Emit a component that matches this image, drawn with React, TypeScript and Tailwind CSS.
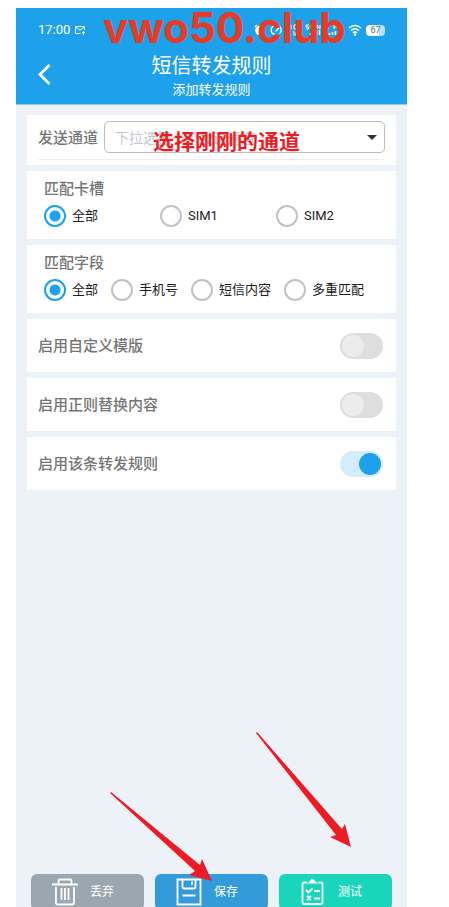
import { useState } from "react";
import type { ReactNode } from "react";

interface RadioGroupProps {
  title: string;
  name: string;
  options: string[];
  className: string;
}

const simOptions = ["全部", "SIM1", "SIM2"];
const fieldOptions = ["全部", "手机号", "短信内容", "多重匹配"];

const switches = [
  { label: "启用自定义模版", on: false },
  { label: "启用正则替换内容", on: false },
  { label: "启用该条转发规则", on: true },
];

function StatusBar() {
  return (
    <div className="flex h-11 items-center justify-between pl-[22px] pr-[22px] text-white">
      <div className="flex items-center gap-1">
        <span className="text-[13px] leading-4">17:00</span>
        <svg className="h-3 w-3" viewBox="0 0 12 12" fill="none" stroke="currentColor">
          <path d="M6.500 9.500H1.500V2.500H10.500V6M1.500 3L6 6L10.500 3M8 8.500H11M9.500 7V11" />
        </svg>
      </div>
      <div className="flex items-center gap-1">
        <svg className="h-3 w-3" viewBox="0 0 12 12">
          <circle cx="6" cy="6.500" r="4.800" fill="currentColor" />
          <path d="M.8 3L3 1M11.200 3L9 1" stroke="currentColor" strokeWidth="1.300" />
          <path d="M6 4V7L8 8" fill="none" stroke="#1da1ea" />
        </svg>
        <svg className="h-3 w-3" viewBox="0 0 12 12" fill="none" stroke="currentColor" strokeWidth="1.300">
          <path d="M3 10A5 5 0 1 1 9.500 9.800M5.500 7.500L9 4M3 10H5" />
        </svg>
        <svg className="h-3 w-[58px]" viewBox="0 0 58 12" fill="none" stroke="currentColor">
          <path d="M2.500 1V5H5V1H2.500M8 1H12V5H8V1M2 7V11M5 7L3 9L5 11M8 7V11H10V8M13 7L11 11" />
          <path d="M23 1H20V3H22.500V5H20M28 1H25V5H28V3M31 5V1L34 5V1" />
          <path d="M24.500 11V9M27.500 11V8M30.500 11V7M33.500 11V6" strokeWidth="1.500" />
          <path d="M42 1H39V5H42V3M48 5V1M48 3H52M52 5V1" />
          <path d="M43.500 11V9M46.500 11V8M49.500 11V7M52.500 11V6" strokeWidth="1.500" />
        </svg>
        <svg className="h-3 w-[14px]" viewBox="0 0 14 12" fill="none" stroke="currentColor" strokeWidth="1.500">
          <path d="M1 4Q7 -1 13 4M3 6.500Q7 3 11 6.500M5 8.800Q7 7 9 8.800" />
          <circle cx="7" cy="10.500" r=".6" fill="currentColor" />
        </svg>
        <span className="flex h-[11px] w-[19px] items-center justify-center rounded-[4px] bg-linear-to-r from-white from-70% to-[#b9e2f8] to-70% text-[9px] leading-none text-[#4a7088]">
          67
        </span>
      </div>
    </div>
  );
}

function Header() {
  return (
    <header className="h-[97px] border-b border-[#8fcdf1] bg-[#1da1ea] text-white">
      <StatusBar />
      <div className="grid grid-cols-[56px_1fr_56px]">
        <button type="button" aria-label="返回" className="flex items-center pl-[21px]">
          <svg className="h-6 w-3.5" viewBox="0 0 14 24" fill="none" stroke="currentColor" strokeWidth="2.800">
            <path d="M12.500 1L3 10.500L12.500 20" />
          </svg>
        </button>
        <div className="text-center">
          <h1 className="pt-0.5 text-[20px] leading-6">短信转发规则</h1>
          <p className="mt-0.5 text-[13px] leading-5">添加转发规则</p>
        </div>
      </div>
    </header>
  );
}

function Card({ children }: { children: ReactNode }) {
  return <section className="bg-white">{children}</section>;
}

function ChannelSelect() {
  return (
    <div className="px-[11px] pt-1.5 pb-[5px]">
      <div className="flex items-center gap-1.5 border-b border-[#efefef] pb-1.5">
        <label htmlFor="channel" className="pt-0.5 text-[15px] font-medium text-[#757575]">
          发送通道
        </label>
        <div className="relative flex-1">
          <select
            id="channel"
            className="h-8 w-full appearance-none rounded-[5px] border border-[#bdbdbd] bg-white pt-0.5 pl-2.5 text-[14px] text-[#c3c8d0]"
          >
            <option>下拉选择一个发送通道</option>
          </select>
          <span className="pointer-events-none absolute top-3.5 right-2 border-x-[5px] border-t-[5px] border-x-transparent border-t-[#333]" />
          <strong className="pointer-events-none absolute top-[7px] left-[49px] text-[21px] leading-7 font-bold whitespace-nowrap text-[#ed1c24]">
            选择刚刚的通道
          </strong>
        </div>
      </div>
    </div>
  );
}

function RadioGroup({ title, name, options, className }: RadioGroupProps) {
  const [selected, setSelected] = useState(options[0]);

  return (
    <fieldset className="h-[68px] pl-[17px]">
      <legend className="float-left w-full pt-2 text-[15px] leading-5 font-medium text-[#757575]">{title}</legend>
      <div className={`clear-both pt-1.5 ${className}`}>
        {options.map((option) => (
          <label key={option} className="flex items-center gap-1.5 text-[13px] leading-[22px] whitespace-nowrap text-[#1c1c1c]">
            <input
              type="radio"
              name={name}
              checked={selected === option}
              onChange={() => setSelected(option)}
              className="h-[22px] w-[22px] shrink-0 appearance-none rounded-full border-2 border-[#c2c2c8] bg-white checked:border-[#1da1ea] checked:bg-[radial-gradient(circle,#1da1ea_5px,white_6px)]"
            />
            {option}
          </label>
        ))}
      </div>
    </fieldset>
  );
}

function SwitchRow({ label, on }: { label: string; on: boolean }) {
  return (
    <label className="flex h-[53px] items-center justify-between pr-[13px] pl-[11px] text-[15px] font-medium text-[#757575]">
      <span className="pt-0.5">{label}</span>
      <input
        type="checkbox"
        role="switch"
        defaultChecked={on}
        className="flex h-[26px] w-[43px] appearance-none items-center rounded-full bg-[#dedede] px-0.5 before:h-[22px] before:w-[22px] before:rounded-full before:bg-[#ececec] checked:justify-end checked:bg-[#d3edfc] checked:before:bg-[#1da1ea]"
      />
    </label>
  );
}

function TrashIcon() {
  return (
    <svg className="h-7 w-[26px]" viewBox="0 0 26 28" fill="none" stroke="currentColor" strokeWidth="1.800">
      <path d="M0 6.500H26M6.500 6V3Q6.500 1.500 8 1.500H18Q19.500 1.500 19.500 3V6M4 9V24.500Q4 26.500 6 26.500H20Q22 26.500 22 24.500V9M9.500 10V22M13 10V22M16.500 10V22" />
    </svg>
  );
}

function SaveIcon() {
  return (
    <svg className="h-7 w-[26px]" viewBox="0 0 26 28" fill="none" stroke="currentColor" strokeWidth="1.800">
      <path d="M1.500 1.500H24.500V26.500H1.500ZM6.500 2V9Q6.500 10.500 8 10.500H18Q19.500 10.500 19.500 9V2M16 3.500V7M6.500 17.500H19.500" />
    </svg>
  );
}

function TestIcon() {
  return (
    <svg className="h-7 w-[26px]" viewBox="0 0 26 28" fill="none" stroke="currentColor" strokeWidth="1.800">
      <path d="M7 4.500H4Q2.500 4.500 2.500 6V24.500Q2.500 26 4 26H21Q22.500 26 22.500 24.500V6Q22.500 4.500 21 4.500H18" />
      <path d="M7 5.500L10 3Q12.500 -1.500 15 3L18 5.500Z" fill="currentColor" stroke="none" />
      <path d="M6 12L8.500 14.500L12.500 10.500M14 13H20M7 18L11 22M11 18L7 22M14 20.500H20" />
    </svg>
  );
}

function Actions() {
  return (
    <footer className="-mb-[3px] grid grid-cols-3 gap-[11px] px-[15px] text-[12px] text-white">
      <button type="button" className="flex h-9 items-center gap-3 rounded-md bg-[#9ba7b0] pl-[21px]">
        <TrashIcon />
        丢弃
      </button>
      <button type="button" className="flex h-9 items-center gap-3 rounded-md bg-[#349bd9] pl-[21px]">
        <SaveIcon />
        保存
      </button>
      <button type="button" className="flex h-9 items-center gap-3 rounded-md bg-[#19d5b9] pl-[21px]">
        <TestIcon />
        测试
      </button>
    </footer>
  );
}

// Hand drawn pointers to the save and test buttons
function Arrows() {
  return (
    <svg className="pointer-events-none absolute bottom-0 left-0 h-[187px] w-[391px]" viewBox="0 0 391 187" fill="#ed1c24">
      <path d="M94 73L95 72L184 145L186 139L196 161L173 155L179 151Z" />
      <path d="M240 13L241 12L326 109L329 104L335 127L314 117L320 115Z" />
    </svg>
  );
}

export default function App() {
  return (
    <div className="h-screen overflow-hidden bg-white pt-2 pr-[42px] pl-4 font-[Roboto,'Noto_Sans_CJK_SC',sans-serif]">
      <main className="relative flex h-full flex-col bg-[#edf2f9]">
        <Header />
        <div className="pointer-events-none absolute top-0 left-[87px] font-[Inter,sans-serif] text-[42px] leading-10 font-bold text-[#e83b25]">
          vwo50.club
        </div>
        <div className="flex flex-1 flex-col gap-1.5 px-[11px] pt-2.5">
          <Card>
            <ChannelSelect />
          </Card>
          <Card>
            <RadioGroup title="匹配卡槽" name="sim" options={simOptions} className="grid grid-cols-[116px_116px_1fr]" />
          </Card>
          <Card>
            <RadioGroup title="匹配字段" name="field" options={fieldOptions} className="flex gap-[13px]" />
          </Card>
          {switches.map((item) => (
            <Card key={item.label}>
              <SwitchRow label={item.label} on={item.on} />
            </Card>
          ))}
        </div>
        <Actions />
        <Arrows />
      </main>
    </div>
  );
}
